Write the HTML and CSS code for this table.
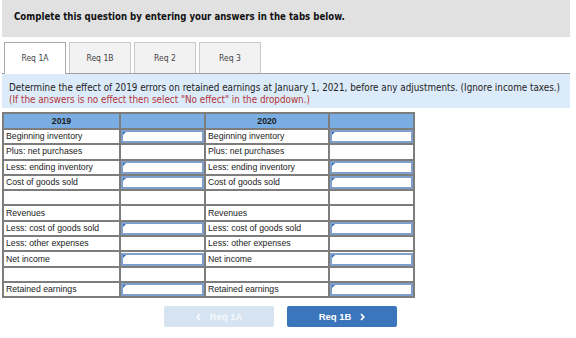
FILE: index.html
```html
<!DOCTYPE html>
<html lang="en">
<head>
    <meta charset="UTF-8">
    <title>Req 1A</title>
    <link rel="stylesheet" href="styles.css">
</head>
<body>
    <div class="wrap">
        <div class="prompt">Complete this question by entering your answers in the tabs below.</div>

        <div class="tabs">
            <div class="tab active">Req 1A</div>
            <div class="tab">Req 1B</div>
            <div class="tab">Req 2</div>
            <div class="tab">Req 3</div>
        </div>

        <div class="instructions">
            <p>Determine the effect of 2019 errors on retained earnings at January 1, 2021, before any adjustments. (Ignore income taxes.)</p>
            <p class="note">(If the answers is no effect then select "No effect" in the dropdown.)</p>
        </div>

        <table class="grid">
            <colgroup>
                <col class="c-label1">
                <col class="c-input">
                <col class="c-label2">
                <col class="c-input">
            </colgroup>
            <thead>
                <tr><th>2019</th><th></th><th>2020</th><th></th></tr>
            </thead>
            <tbody>
                <tr><td>Beginning inventory</td><td class="entry"><span class="box"></span></td><td>Beginning inventory</td><td class="entry"><span class="box"></span></td></tr>
                <tr><td>Plus: net purchases</td><td></td><td>Plus: net purchases</td><td></td></tr>
                <tr><td>Less: ending inventory</td><td class="entry"><span class="box"></span></td><td>Less: ending inventory</td><td class="entry"><span class="box"></span></td></tr>
                <tr><td>Cost of goods sold</td><td class="entry"><span class="box"></span></td><td>Cost of goods sold</td><td class="entry"><span class="box"></span></td></tr>
                <tr><td></td><td></td><td></td><td></td></tr>
                <tr><td>Revenues</td><td></td><td>Revenues</td><td></td></tr>
                <tr><td>Less: cost of goods sold</td><td class="entry"><span class="box"></span></td><td>Less: cost of goods sold</td><td class="entry"><span class="box"></span></td></tr>
                <tr><td>Less: other expenses</td><td></td><td>Less: other expenses</td><td></td></tr>
                <tr><td>Net income</td><td class="entry"><span class="box"></span></td><td>Net income</td><td class="entry"><span class="box"></span></td></tr>
                <tr><td></td><td></td><td></td><td></td></tr>
                <tr><td>Retained earnings</td><td class="entry"><span class="box"></span></td><td>Retained earnings</td><td class="entry"><span class="box"></span></td></tr>
            </tbody>
        </table>

        <div class="nav">
            <button class="nav-btn disabled">
                <svg class="chev" width="5" height="8" viewBox="0 0 5 8"><path d="M4 1 L1.2 4 L4 7" fill="none" stroke="currentColor" stroke-width="1.8"/></svg>
                <span>Req 1A</span>
            </button>
            <button class="nav-btn primary">
                <span>Req 1B</span>
                <svg class="chev" width="5" height="8" viewBox="0 0 5 8"><path d="M1 1 L3.8 4 L1 7" fill="none" stroke="currentColor" stroke-width="1.8"/></svg>
            </button>
        </div>
    </div>
</body>
</html>
```

FILE: styles.css
```css
body {
    margin: 0;
    font-family: "DejaVu Sans Condensed", "DejaVu Sans", sans-serif;
    background-color: #ffffff;
    color: #222;
}

.wrap {
    width: 568px;
    margin-left: 2px;
}

.prompt {
    background-color: #e1e1e1;
    height: 37px;
    line-height: 34px;
    padding-left: 12px;
    font-size: 9.6px;
    font-weight: bold;
    color: #111;
}

.tabs {
    display: flex;
    gap: 3px;
    margin-top: 5px;
    padding-left: 2px;
    border-bottom: 1px solid #a0a0a0;
}

.tab {
    width: 60px;
    height: 30px;
    line-height: 31px;
    text-align: center;
    font-size: 8.5px;
    color: #444;
    background-color: #f2f2f2;
    border: 1px solid #c9c9c9;
    border-bottom: none;
}

.tab.active {
    background-color: #ffffff;
    border-color: #a9a9a9;
    margin-bottom: -1px;
    height: 31px;
}

.instructions {
    background-color: #dcebf9;
    height: 34px;
    box-sizing: border-box;
    padding: 8px 6px 0 7px;
    font-size: 9.8px;
    color: #222;
}

.instructions p {
    margin: 0;
    line-height: 12px;
    white-space: nowrap;
}

.instructions .note {
    color: #b1363a;
}

.grid {
    margin-top: 4px;
    border-collapse: collapse;
    font-family: "Liberation Sans", Arial, sans-serif;
    font-size: 8.7px;
    color: #222;
}

.c-label1 { width: 117px; }
.c-label2 { width: 124px; }
.c-input { width: 85px; }

.grid th,
.grid td {
    border: 2px solid #7d7d7d;
    padding: 0 2px;
    line-height: 11px;
    white-space: nowrap;
}

.grid tbody tr {
    height: 15.3px;
}

.grid thead tr {
    height: 16px;
}

.grid th {
    background-color: #7aaee2;
    font-weight: bold;
    color: #1a1a1a;
    text-align: center;
}

.grid td.entry {
    padding: 0;
}

.box {
    display: block;
    height: 9px;
    border: 2px solid #7f9fcc;
    background-color: #fff;
    position: relative;
}

/* little dropdown flag in the corner */
.box::before {
    content: "";
    position: absolute;
    left: 0;
    top: 0;
    border-top: 3px solid #3a6db5;
    border-right: 3px solid transparent;
}

.nav {
    display: flex;
    gap: 13px;
    margin-top: 8px;
    padding-left: 162px;
}

.nav-btn {
    width: 110px;
    height: 21px;
    border: none;
    border-radius: 2px;
    font-family: "Liberation Sans", Arial, sans-serif;
    font-size: 9.5px;
    font-weight: bold;
    color: #fff;
    padding: 0;
    display: flex;
    align-items: center;
    justify-content: center;
    gap: 9px;
}

.nav-btn.disabled {
    background-color: #d6e3f1;
    color: #f4f8fc;
}

.nav-btn.primary {
    background-color: #3b75bb;
}
```
